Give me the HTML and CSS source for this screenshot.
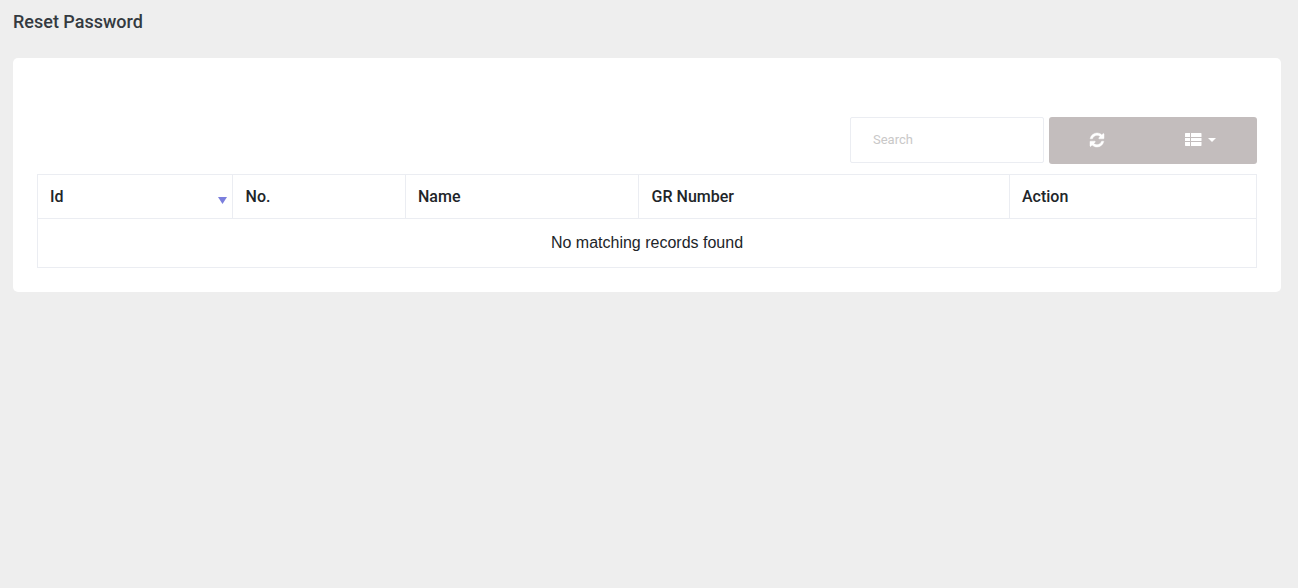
FILE: index.html
```html
<!DOCTYPE html>
<html lang="en">
<head>
<meta charset="utf-8">
<title>Reset Password</title>
<link rel="stylesheet" href="styles.css">
</head>
<body>
<h3 class="page-title">Reset Password</h3>
<main class="card">
  <div class="toolbar">
    <input class="search" type="text" placeholder="Search">
    <div class="button-group">
      <button class="tool-button" type="button" aria-label="Refresh">
        <svg class="icon-refresh" viewBox="0 0 1536 1536"><path d="M1511 928q0 5-1 7-64 268-268 434.500T764 1536q-146 0-282.500-55T238 1324l-129 129q-19 19-45 19t-45-19-19-45V960q0-26 19-45t45-19h448q26 0 45 19t19 45-19 45l-137 137q71 66 161 102t187 36q134 0 250-65t186-179q11-17 53-117 8-23 30-23h192q13 0 22.500 9.500t9.500 22.500zm25-800v448q0 26-19 45t-45 19h-448q-26 0-45-19t-19-45 19-45l138-138Q969 256 768 256q-134 0-250 65T332 500q-11 17-53 117-8 23-30 23H50q-13 0-22.500-9.500T18 608v-7q65-268 270-434.500T768 0q146 0 284 55.500T1297 212l130-129q19-19 45-19t45 19 19 45z"/></svg>
      </button>
      <button class="tool-button" type="button" aria-label="Columns">
        <svg class="icon-list" viewBox="0 0 17 13"><path d="M.5 0H5v4H0V.5zM6 0h10l.5.5V4H6zM0 5h5v3H0zM6 5h10.500v3H6zM0 9h5v4H.5L0 12.500zM6 9h10.500v3.500L16 13H6z"/></svg>
        <span class="caret"></span>
      </button>
    </div>
  </div>
  <table class="records">
    <colgroup><col class="col-id"><col class="col-no"><col class="col-name"><col class="col-gr"><col class="col-action"></colgroup>
    <thead><tr>
      <th><div class="sortable">Id<svg class="sort-icon" viewBox="0 0 9 7"><path d="M0 0h9L4.500 7z"/></svg></div></th>
      <th class="offset-label">No.</th><th>Name</th><th class="offset-label">GR Number</th><th>Action</th>
    </tr></thead>
    <tbody><tr><td colspan="5">No matching records found</td></tr></tbody>
  </table>
</main>
</body>
</html>
```
FILE: styles.css
```css
* { box-sizing: border-box; }
body { margin: 0; padding: 11px 17px 0 13px; background: #eee; color: #212529; font-family: Roboto, sans-serif; }
.page-title { margin: 0 0 26px; font-size: 18px; line-height: 21px; font-weight: 500; color: #343a40; }
.card { height: 234px; padding: 59px 24px 24px; border-radius: 5px; background: #fff; }
.toolbar { display: flex; justify-content: flex-end; gap: 5px; height: 47px; margin-bottom: 10px; }
.search { width: 194px; height: 46px; padding: 0 22px 2px; border: 1px solid #ebedf2; border-radius: 2px; font: 13px Roboto, sans-serif; outline: 0; }
.search::placeholder { color: #c9c8c8; opacity: 1; }
.button-group { display: flex; width: 208px; border-radius: 3px; overflow: hidden; background: #c3bdbd; }
.tool-button { display: flex; align-items: center; justify-content: center; width: 96px; padding: 0 0 1px; border: 0; background: none; color: #fff; }
.tool-button + .tool-button { width: 112px; gap: 6px; padding: 0 1px 2px 0; }
.icon-refresh { width: 14px; height: 14px; fill: currentColor; stroke: currentColor; stroke-width: 50; overflow: visible; }
.icon-list { width: 17px; height: 13px; fill: currentColor; }
.caret { border: 4px solid transparent; border-top-color: currentColor; border-bottom: 0; }
.records { width: 1220px; table-layout: fixed; border-collapse: collapse; }
.records th, .records td { border: 1px solid #ebedf2; }
.records th { height: 44px; padding: 0 12px; text-align: left; font-size: 16px; font-weight: 500; }
.records .offset-label { padding-left: 12.6px; }
.records td { height: 49px; padding: 0; text-align: center; font: 16px "Liberation Sans", Arial, sans-serif; }
.col-id { width: 195px; }
.col-no { width: 173px; }
.col-name { width: 233px; }
.col-gr { width: 371px; }
.sortable { display: flex; align-items: center; justify-content: space-between; margin-right: -7px; }
.sort-icon { width: 9px; height: 7px; margin-top: 7px; fill: #7b7fdd; }
```
